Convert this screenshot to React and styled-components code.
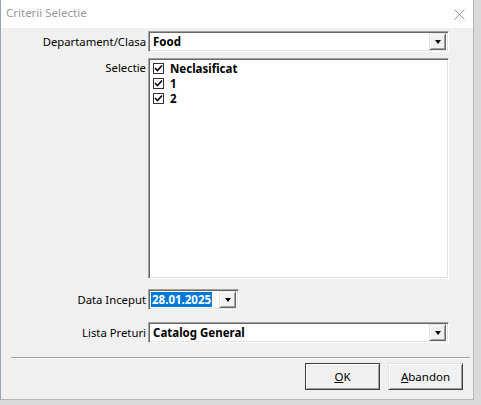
import React from "react";
import styled, { createGlobalStyle } from "styled-components";

const Global = createGlobalStyle`
  html, body { margin: 0; padding: 0; background: #dcdcdc; }
  body { font-family: "Noto Sans", "DejaVu Sans", sans-serif; }
`;

const Screen = styled.div`
  width: 481px;
  height: 405px;
  overflow: hidden;
  background: #dadada;
`;

const Window = styled.div`
  width: 474px;
  height: 400px;
  background: #f0f0f0;
  border-left: 1px solid #9aa4ad;
  border-right: 1px solid #b5b5b5;
  border-bottom: 1px solid #b5b5b5;
  box-sizing: border-box;
  display: flex;
  flex-direction: column;
`;

const TitleBar = styled.div`
  height: 28px;
  background: #ffffff;
  display: flex;
  align-items: center;
  justify-content: space-between;
  padding: 0 8px 0 5px;
  flex-shrink: 0;
`;

const Title = styled.span`
  font-family: "Noto Sans", sans-serif;
  font-size: 11.5px;
  color: #9a9a9a;
  margin-top: -3px;
`;

const Body = styled.div`
  padding: 3px 0 0 0;
  display: flex;
  flex-direction: column;
`;

const Row = styled.div`
  display: grid;
  grid-template-columns: 147px 301px;
  height: ${(p) => p.$h || "21px"};
  margin-top: ${(p) => p.$mt || "0"};
`;

const Label = styled.div`
  font-family: "Noto Sans", sans-serif;
  font-size: 11.3px;
  color: #000;
  text-align: right;
  padding-right: 2px;
  align-self: ${(p) => (p.$top ? "start" : "center")};
  padding-top: ${(p) => (p.$top ? "2px" : "0")};
  line-height: 16px;
`;

const Sunken = styled.div`
  box-sizing: border-box;
  background: #fff;
  border-top: 1px solid #a0a0a0;
  border-left: 1px solid #a0a0a0;
  border-right: 1px solid #ffffff;
  border-bottom: 1px solid #ffffff;
  box-shadow: inset 1px 1px 0 #696969, inset -1px -1px 0 #e3e3e3;
`;

const Combo = styled(Sunken)`
  display: flex;
  align-items: center;
  justify-content: space-between;
  padding: 0 2px 0 4px;
  height: 21px;
  width: ${(p) => p.$w || "301px"};
`;

const ComboText = styled.span`
  font-family: "Noto Sans", sans-serif;
  font-weight: bold;
  font-size: 11.5px;
  color: ${(p) => (p.$sel ? "#fff" : "#000")};
  background: ${(p) => (p.$sel ? "#0078d7" : "transparent")};
  padding: ${(p) => (p.$sel ? "0 1px" : "0")};
  margin-left: ${(p) => (p.$sel ? "-2px" : "0")};
  line-height: 15px;
`;

const DropBtn = styled.div`
  width: 17px;
  height: 17px;
  box-sizing: border-box;
  background: #f0f0f0;
  border-top: 1px solid #e3e3e3;
  border-left: 1px solid #e3e3e3;
  border-right: 1px solid #696969;
  border-bottom: 1px solid #696969;
  box-shadow: inset 1px 1px 0 #fff, inset -1px -1px 0 #a0a0a0;
  display: flex;
  align-items: center;
  justify-content: center;
`;

const Arrow = styled.div`
  width: 0;
  height: 0;
  border-left: 3.5px solid transparent;
  border-right: 3.5px solid transparent;
  border-top: 4px solid #000;
  margin-top: 1px;
`;

const ListBox = styled(Sunken)`
  padding: 2px 0 0 4px;
  display: flex;
  flex-direction: column;
`;

const Item = styled.div`
  display: flex;
  align-items: center;
  height: 15px;
  gap: 4px;
`;

const Check = styled.div`
  width: 11px;
  height: 11px;
  box-sizing: border-box;
  border: 1px solid #333;
  background: #fff;
  display: flex;
  align-items: center;
  justify-content: center;
`;

const ItemText = styled.span`
  font-family: "Noto Sans", sans-serif;
  font-weight: bold;
  font-size: 11.5px;
  color: #000;
  margin-left: 2px;
`;

const Separator = styled.div`
  margin: 14px 3px 0 10px;
  height: 0;
  border-top: 1px solid #a0a0a0;
  border-bottom: 1px solid #ffffff;
`;

const Buttons = styled.div`
  display: flex;
  justify-content: flex-end;
  gap: 8px;
  padding: 4px 10px 0 0;
`;

const Button = styled.button`
  width: 75px;
  height: 27px;
  box-sizing: border-box;
  background: #f0f0f0;
  font-family: "Noto Sans", sans-serif;
  font-size: 11.5px;
  color: #000;
  padding: 0;
  border-top: 1px solid ${(p) => (p.$def ? "#404040" : "#e3e3e3")};
  border-left: 1px solid ${(p) => (p.$def ? "#404040" : "#e3e3e3")};
  border-right: 1px solid #404040;
  border-bottom: 1px solid #404040;
  box-shadow: ${(p) =>
    p.$def
      ? "inset 1px 1px 0 #fff, inset -1px -1px 0 #a0a0a0, inset 2px 2px 0 #f0f0f0"
      : "inset 1px 1px 0 #fff, inset -1px -1px 0 #a0a0a0"};
  outline: none;
  u { text-decoration: underline; }
`;

const CheckMark = () => (
  <svg width="9" height="9" viewBox="0 0 9 9">
    <path d="M1 4 L3.5 6.5 L8 1.5" fill="none" stroke="#000" strokeWidth="1.6" />
  </svg>
);

const CloseIcon = () => (
  <svg width="11" height="11" viewBox="0 0 11 11">
    <path d="M0.5 0.5 L10.5 10.5 M10.5 0.5 L0.5 10.5" stroke="#9a9a9a" strokeWidth="1" />
  </svg>
);

const items = ["Neclasificat", "1", "2"];

export default function App() {
  return (
    <>
      <Global />
      <Screen>
        <Window>
          <TitleBar>
            <Title>Criterii Selectie</Title>
            <CloseIcon />
          </TitleBar>
          <Body>
            <Row>
              <Label>Departament/Clasa</Label>
              <Combo>
                <ComboText>Food</ComboText>
                <DropBtn><Arrow /></DropBtn>
              </Combo>
            </Row>

            <Row $h="221px" $mt="6px">
              <Label $top>Selectie</Label>
              <ListBox>
                {items.map((t) => (
                  <Item key={t}>
                    <Check><CheckMark /></Check>
                    <ItemText>{t}</ItemText>
                  </Item>
                ))}
              </ListBox>
            </Row>

            <Row $mt="10px">
              <Label>Data Inceput</Label>
              <Combo $w="91px">
                <ComboText $sel>28.01.2025</ComboText>
                <DropBtn><Arrow /></DropBtn>
              </Combo>
            </Row>

            <Row $mt="12px">
              <Label>Lista Preturi</Label>
              <Combo>
                <ComboText>Catalog General</ComboText>
                <DropBtn><Arrow /></DropBtn>
              </Combo>
            </Row>

            <Separator />
            <Buttons>
              <Button $def><u>O</u>K</Button>
              <Button><u>A</u>bandon</Button>
            </Buttons>
          </Body>
        </Window>
      </Screen>
    </>
  );
}
